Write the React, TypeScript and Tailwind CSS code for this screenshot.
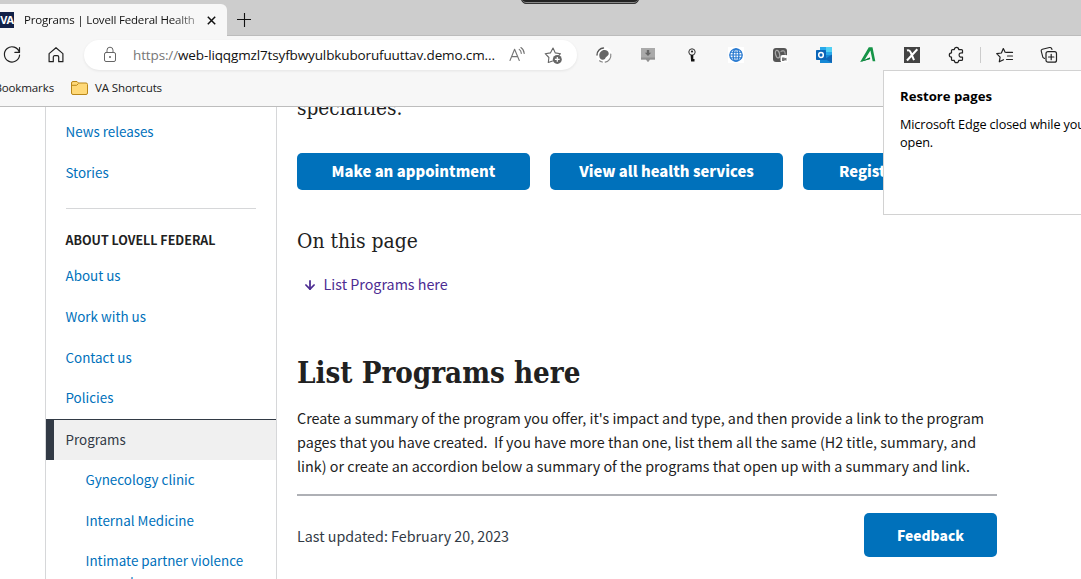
import type { ReactNode } from "react";
import { FiArrowDown } from "react-icons/fi";

const stroke = { fill: "none", stroke: "currentColor", strokeLinecap: "round", strokeLinejoin: "round" } as const;

function Icon({ children, className = "" }: { children: ReactNode; className?: string }) {
  return (
    <svg width="20" height="20" viewBox="0 0 20 20" className={`shrink-0 ${className}`}>
      {children}
    </svg>
  );
}

const Reload = () => (
  <Icon>
    <path {...stroke} strokeWidth="1.2" d="M17.3 7.2A7.6 7.6 0 1 0 17.6 10M17.5 2.6v4.8h-4.6" />
  </Icon>
);
const Home = () => (
  <Icon>
    <path {...stroke} strokeWidth="1.2" d="M3.1 8.6 10 2.7l6.9 5.9v8.1h-4.2v-4.6c0-.9-.5-1.4-1.4-1.4H8.7c-.9 0-1.4.5-1.4 1.4v4.6H3.1z" />
  </Icon>
);
const Lock = () => (
  <Icon className="text-[#666]">
    <rect {...stroke} x="4.5" y="7.5" width="11" height="9" rx="1.5" />
    <path {...stroke} d="M7 7.4V5.2a3 3 0 0 1 6 0v2.2" />
    <circle cx="10" cy="12" r="1" fill="currentColor" />
  </Icon>
);
const ReadAloud = () => (
  <Icon className="text-[#757575]">
    <path {...stroke} strokeWidth="1.1" d="M3 15.5 7.6 4.2l4.7 11.3M4.6 11.6h6M12.200 4.400c1.300.9 2 2.200 2.100 4M13.900 2.500c2 1.300 3.200 3.400 3.300 6" />
  </Icon>
);
const StarAdd = () => (
  <Icon className="text-[#666]">
    <path {...stroke} strokeWidth="1.1" d="M9.500 16 5.300 17.500l.6-5-3.700-3.800 5.200-.8L10 3l2.300 4.900 5.200.8-1.600 1.700" />
    <circle cx="14.3" cy="14.4" r="4.500" fill="#666" />
    <path d="M14.300 12v4.800M11.900 14.400h4.800" stroke="#fff" strokeWidth="1.2" />
  </Icon>
);
const Swirl = () => (
  <Icon>
    <circle cx="10" cy="10" r="8" fill="#fff" />
    <path d="M5.300 11C5 7 8.500 4.500 11 5c2.500.2 4.300 2.300 3.600 4.500-.6 1.500-3 2-3.700 4.500-2.400 1.700-5.600 0-5.600-3z" fill="#666" />
    <path {...stroke} stroke="#555" d="M3 10C3 6 6.300 3 9.500 3" strokeWidth="1.4" />
    <path {...stroke} stroke="#888" d="M16.800 9c.6 4-2 7.400-5.600 8.100M5.500 15.800c1 .8 2 1.200 3 1.200" strokeWidth="1.2" />
  </Icon>
);
const DownloadBadge = () => (
  <Icon>
    <path d="M3 3h14v11.500h-5L10 17l-2-2.500H3z" fill="#aaa" />
    <path d="M3 12.500h14v2h-5L10 17l-2-2.500H3z" fill="#919191" />
    <path d="M8.800 5h2.400v2.700h2L10 11 6.800 7.700h2z" fill="#666" />
  </Icon>
);
const Key = () => (
  <Icon>
    <circle cx="10" cy="7" r="3.2" fill="#eee" stroke="#333" strokeWidth="1" />
    <circle cx="10" cy="6.500" r="1" fill="#111" />
    <path d="M8.600 10h2.700v6.500H9.100zM11 14h1.500v2.500H11z" fill="#111" />
  </Icon>
);
const Globe = () => (
  <Icon>
    <path fill="#fff" d="M2 2h16v16H2z" />
    <g fill="none" stroke="#2678d0" strokeWidth="1.3">
      <circle cx="10" cy="10" r="6.200" />
      <ellipse cx="10" cy="10" rx="2.900" ry="6.200" />
      <path d="M10 3.800v12.400M4.400 7.300h11.200M3.800 10h12.400M4.400 12.800h11.200" strokeWidth="1" />
    </g>
  </Icon>
);
const Recorder = () => (
  <Icon>
    <rect x="3" y="3" width="14" height="14" rx="3" fill="#555" />
    <ellipse cx="7.500" cy="9.300" rx="2" ry="3.800" fill="none" stroke="#aaa" strokeWidth="1.300" transform="rotate(-15 7 9)" />
    <path {...stroke} stroke="#999" strokeWidth="1.300" d="M11 6.500c2-1.500 4-.8 4.200 2.500" />
    <rect x="10.500" y="10" width="7.500" height="7.500" rx="2" fill="#fff" />
    <path d="M12 12.500h2.500v.8l2-.6v3l-2-.6v.8H12z" fill="#777" />
  </Icon>
);
const Outlook = () => (
  <Icon>
    <path d="M6 2h12v10H6z" fill="#28a8ea" />
    <path d="M12 2h6v5h-6z" fill="#50d0f4" />
    <path d="M6 10h12v8H6z" fill="#1588d5" />
    <path d="m11 14 7-4.500V18z" fill="#1066b5" />
    <rect x="2" y="5" width="10" height="10" rx=".7" fill="#0a65b8" />
    <ellipse cx="7" cy="10" rx="2.300" ry="2.500" fill="none" stroke="#fff" strokeWidth="1.500" />
  </Icon>
);
const GreenA = () => (
  <Icon>
    <path d="M2.200 17 10.800 2.300h3.700l2.800 14h-2.600L12.400 5.500 6.500 15l5.200-2.600.6 1.600z" fill="#159447" />
    <path d="M2.200 17 6.500 15l5.200-2.600.4 1.700z" fill="#087a37" />
  </Icon>
);
const XBox = () => (
  <Icon>
    <path d="M2 2h16v16H2z" fill="#434343" />
    <path d="M5 5.500c2-.6 3 .3 3.700 1.800L12 15.200M15.300 4.300 5 15.500" fill="none" stroke="#fff" strokeWidth="2" />
  </Icon>
);
const Puzzle = () => (
  <Icon className="text-[#222]">
    <path
      {...stroke}
      strokeWidth="1.2"
      d="M8.300 4.600a2.200 2.200 0 0 1 4.400 0h2.800q1 0 1 1v2.300c-2.600-.2-3.400.7-3.400 2.100s.8 2.300 3.400 2.100v2.300q0 1-1 1h-2.800a2.200 2.200 0 0 1-4.400 0H6.500q-1 0-1-1v-2.200a2.200 2.200 0 0 1 0-4.400V5.600q0-1 1-1z"
    />
  </Icon>
);
const Favorites = () => (
  <Icon className="text-[#222]">
    <path {...stroke} strokeWidth="1.2" d="M11.500 7.400h6M12.500 11h5M11.500 14.500h6M8.500 14.700l-4.200 2.100.8-4.700-3.400-3.400 4.700-.7L8.300 3.500l2 3.900" />
  </Icon>
);
const Collections = () => (
  <Icon className="text-[#222]">
    <path {...stroke} strokeWidth="1.1" d="M5.500 13.500 3.900 12.400 2.300 6.300c-.3-1 .1-1.800 1.100-2.100L10.500 2.500c1-.2 1.700.1 2.100 1l.4 1" />
    <rect {...stroke} strokeWidth="1.2" x="7" y="6.700" width="10.500" height="10.500" rx="2" />
    <path {...stroke} strokeWidth="1.2" d="M12.200 9.300v5.400M9.500 12h5.400" />
  </Icon>
);

function Slot({ children }: { children: ReactNode }) {
  return <div className="flex w-11 shrink-0 justify-center">{children}</div>;
}

function Browser() {
  return (
    <header className="h-[107px] shrink-0 overflow-hidden border-b border-[#bdbdbd] bg-[#f7f7f7] font-['Open_Sans',sans-serif]">
      <div className="relative flex h-9 items-end border-b border-[#bcbcbc] bg-[#cdcdcd]">
        <div className="relative -mb-px flex h-8 w-[227px] items-center overflow-hidden rounded-tr-[6px] bg-[#f7f7f7]">
          <div className="flex h-4 w-[14px] items-center justify-end overflow-hidden bg-[#112047] pr-px text-[11px] font-bold tracking-[-1px] text-white">
            VA
          </div>
          <div className="ml-[10px] w-[172px] overflow-hidden bg-gradient-to-r from-[#111] from-85% to-[#999] bg-clip-text text-[11.5px] leading-4 tracking-[-0.18px] whitespace-nowrap text-transparent">
            Programs | Lovell Federal Health
          </div>
          <svg width="9" height="9" viewBox="0 0 9 9" className="ml-[11px]">
            <path d="m.8.8 7.400 7.400m0-7.400L.8 8.200" stroke="#111" strokeWidth="1.500" />
          </svg>
        </div>
        <svg width="14" height="14" viewBox="0 0 14 14" className="mb-[8px] ml-[10px]">
          <path d="M7.500 0v14M0 6.500h14" stroke="#111" strokeWidth="1.100" />
        </svg>
        <div className="absolute top-[-5px] left-[521px] h-[9px] w-[118px] rounded-b-[5px] border border-[#333] bg-[#222] shadow-[inset_0_-1px_0_#888]" />
      </div>
      <div className="flex h-[38px] items-center">
        <div className="flex w-[84px] items-center gap-6 pl-[2px]">
          <Reload />
          <Home />
        </div>
        <div className="flex h-[30px] w-[493px] items-center rounded-full bg-white pl-4 shadow-[0_1px_3px_rgba(0,0,0,0.08)]">
          <Lock />
          <span className="ml-[13px] w-[374px] text-[13.5px] leading-5 tracking-[-0.13px] whitespace-nowrap text-[#111]">
            <span className="text-[#767676]">https://</span>web-liqqgmzl7tsyfbwyulbkuborufuuttav.demo.cm...
          </span>
          <ReadAloud />
          <span className="ml-4 flex">
            <StarAdd />
          </span>
        </div>
        <div className="ml-[5px] flex items-center">
          <Slot><Swirl /></Slot>
          <Slot><DownloadBadge /></Slot>
          <Slot><Key /></Slot>
          <Slot><Globe /></Slot>
          <Slot><Recorder /></Slot>
          <Slot><Outlook /></Slot>
          <Slot><GreenA /></Slot>
          <Slot><XBox /></Slot>
          <Slot><Puzzle /></Slot>
        </div>
        <div className="ml-[2px] h-4 w-px bg-[#ccc]" />
        <div className="ml-[2px] flex">
          <Slot><Favorites /></Slot>
          <Slot><Collections /></Slot>
        </div>
      </div>
      <div className="flex h-[27px] items-center text-[11.6px] tracking-[-0.16px] text-[#222]">
        <div className="flex w-[54px] justify-end overflow-hidden whitespace-nowrap">Bookmarks</div>
        <svg width="17" height="14" viewBox="0 0 17 14" className="mr-[7px] ml-[17px]">
          <path d="M.5 2Q.5.5 2 .5h4L7.500 2H15q1.500 0 1.500 1.500V12q0 1.500-1.500 1.500H2Q.5 13.500.5 12z" fill="#ffd978" stroke="#b98719" />
          <path d="M.7 4.300h5L7.500 2.500" fill="none" stroke="#b98719" />
        </svg>
        VA Shortcuts
      </div>
    </header>
  );
}

function NavLink({ children, nested = false }: { children: ReactNode; nested?: boolean }) {
  return (
    <a className={`flex h-[40.75px] shrink-0 items-center text-[13.4px] whitespace-nowrap text-[#0071bb] ${nested ? "pl-[39.5px]" : "pl-[19.5px]"}`}>
      {children}
    </a>
  );
}

function Sidebar() {
  return (
    <nav className="ml-[45px] flex h-[472px] w-[232px] shrink-0 flex-col overflow-hidden border-x border-[#d6d7d9] pt-[4px]">
      <NavLink>News releases</NavLink>
      <NavLink>Stories</NavLink>
      <div className="mx-5 mt-[15px] h-px shrink-0 bg-[#d6d7d9]" />
      <h2 className="mt-[22px] flex h-5 shrink-0 items-center pl-[19.5px] text-[12.47px] font-bold text-[#212121]">ABOUT LOVELL FEDERAL</h2>
      <div className="h-[4.3px] shrink-0" />
      <NavLink>About us</NavLink>
      <NavLink>Work with us</NavLink>
      <NavLink>Contact us</NavLink>
      <NavLink>Policies</NavLink>
      <div className="mt-[1.2px] flex h-[41px] shrink-0 border-t border-[#323a45] bg-[#f0f0f0] text-[13.4px] text-[#323a45]">
        <div className="-mt-px w-2 bg-[#323a45]" />
        <span className="flex items-center pb-[2px] pl-[11.5px]">Programs</span>
      </div>
      <div className="-mt-[1.3px] flex shrink-0 flex-col">
        <NavLink nested>Gynecology clinic</NavLink>
        <NavLink nested>Internal Medicine</NavLink>
        <a className="mt-[10px] block shrink-0 pl-[39.5px] text-[13.4px] leading-[21px] whitespace-nowrap text-[#0071bb]">
          Intimate partner violence
          <br />
          support
        </a>
      </div>
    </nav>
  );
}

function Action({ children, start = false }: { children: ReactNode; start?: boolean }) {
  return (
    <button
      className={`flex h-[37px] w-[233px] shrink-0 items-center rounded-[5px] bg-[#0071bb] pb-px text-[14.8px] font-black whitespace-nowrap text-white ${start ? "justify-start pl-9" : "justify-center"}`}
    >
      {children}
    </button>
  );
}

export default function App() {
  return (
    <div className="relative flex h-[579px] w-[1081px] flex-col overflow-hidden bg-white font-['Noto_Sans_CJK_SC',sans-serif] text-[#212121]">
      <Browser />
      <div className="flex h-[472px]">
        <Sidebar />
        <main className="ml-5 flex h-[472px] w-[700px] shrink-0 flex-col">
          <div className="h-[46px] overflow-hidden">
            <p className="-mt-[13px] font-['DejaVu_Serif_Condensed',serif] text-[20.6px] leading-[28px]">specialties.</p>
          </div>
          <div className="flex gap-5">
            <Action>Make an appointment</Action>
            <Action>View all health services</Action>
            <Action start>Register for care</Action>
          </div>
          <h2 className="mt-[37px] font-['DejaVu_Serif_Condensed',serif] text-[20.85px] leading-[28px]">On this page</h2>
          <a className="mt-[17px] flex h-6 items-center pl-[6px] text-[14.3px] text-[#4c2c92]">
            <FiArrowDown className="mt-[2px] mr-[6.6px] size-[14px]" strokeWidth={3} />
            List Programs here
          </a>
          <h1 className="mt-[58px] font-['DejaVu_Serif_Condensed',serif] text-[29.25px] leading-[38px] font-bold">List Programs here</h1>
          <p className="mt-[14px] text-[14.33px] leading-6 whitespace-nowrap">
            Create a summary of the program you offer, it's impact and type, and then provide a link to the program
            <br />
            pages that you have created.&nbsp; If you have more than one, list them all the same (H2 title, summary, and
            <br />
            link) or create an accordion below a summary of the programs that open up with a summary and link.
          </p>
          <div className="mt-[16px] h-[2px] shrink-0 bg-[#aeb0b5]" />
          <div className="mt-[17px] flex items-center justify-between">
            <span className="pt-px text-[14.29px] text-[#323a45]">Last updated: February 20, 2023</span>
            <button className="h-11 w-[133px] rounded-[5px] bg-[#0071bb] text-[13.85px] font-black text-white">Feedback</button>
          </div>
        </main>
      </div>
      <aside className="absolute top-[70px] left-[883px] h-[145px] w-[220px] border border-[#d2d2d2] bg-white pt-[15px] pl-4 font-['Open_Sans',sans-serif] text-black">
        <h3 className="text-[13.15px] leading-5 font-bold">Restore pages</h3>
        <p className="mt-[9px] text-[12.7px] leading-[18px] tracking-[-0.12px] whitespace-nowrap">
          Microsoft Edge closed while you
          <br />
          open.
        </p>
      </aside>
    </div>
  );
}
